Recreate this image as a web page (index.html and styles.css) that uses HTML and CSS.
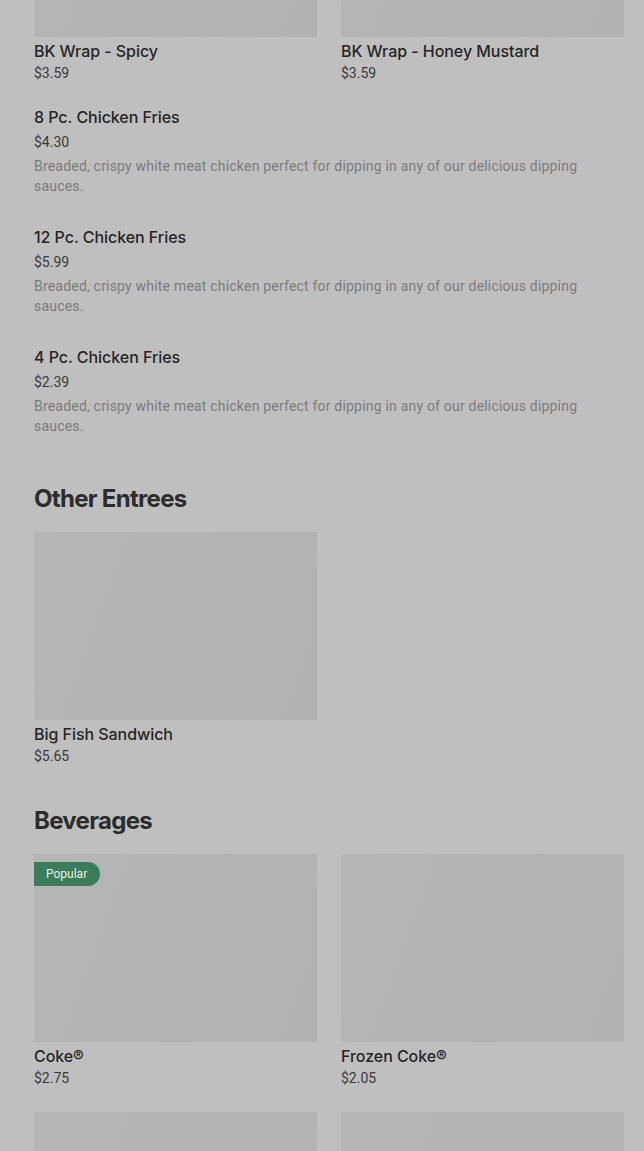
FILE: index.html
```html
<!DOCTYPE html>
<html lang="en">
<head>
<meta charset="utf-8">
<title>Menu</title>
<link rel="stylesheet" href="styles.css">
</head>
<body>
<main class="menu">
  <section class="section first">
    <div class="grid">
      <div class="card">
        <div class="thumb"></div>
        <div class="card-title">BK Wrap - Spicy</div>
        <div class="price">$3.59</div>
      </div>
      <div class="card">
        <div class="thumb"></div>
        <div class="card-title">BK Wrap - Honey Mustard</div>
        <div class="price">$3.59</div>
      </div>
    </div>
    <ul class="list">
      <li class="item">
        <div class="item-title">8 Pc. Chicken Fries</div>
        <div class="price">$4.30</div>
        <p class="desc">Breaded, crispy white meat chicken perfect for dipping in any of our delicious dipping sauces.</p>
      </li>
      <li class="item">
        <div class="item-title">12 Pc. Chicken Fries</div>
        <div class="price">$5.99</div>
        <p class="desc">Breaded, crispy white meat chicken perfect for dipping in any of our delicious dipping sauces.</p>
      </li>
      <li class="item">
        <div class="item-title">4 Pc. Chicken Fries</div>
        <div class="price">$2.39</div>
        <p class="desc">Breaded, crispy white meat chicken perfect for dipping in any of our delicious dipping sauces.</p>
      </li>
    </ul>
  </section>

  <section class="section">
    <h2 class="heading">Other Entrees</h2>
    <div class="grid">
      <div class="card">
        <div class="thumb"></div>
        <div class="card-title">Big Fish Sandwich</div>
        <div class="price">$5.65</div>
      </div>
    </div>
  </section>

  <section class="section">
    <h2 class="heading">Beverages</h2>
    <div class="grid">
      <div class="card">
        <div class="thumb"><span class="badge">Popular</span></div>
        <div class="card-title">Coke®</div>
        <div class="price">$2.75</div>
      </div>
      <div class="card">
        <div class="thumb"></div>
        <div class="card-title">Frozen Coke®</div>
        <div class="price">$2.05</div>
      </div>
      <div class="card">
        <div class="thumb"></div>
        <div class="card-title">Sprite®</div>
        <div class="price">$2.75</div>
      </div>
      <div class="card">
        <div class="thumb"></div>
        <div class="card-title">Fanta®</div>
        <div class="price">$2.75</div>
      </div>
    </div>
  </section>
</main>
</body>
</html>
```
FILE: styles.css
```css
html, body {
  margin: 0;
  padding: 0;
  background: #bfbfbf;
  overflow: hidden;
}
body {
  font-family: Roboto, "Liberation Sans", sans-serif;
  color: #333;
}
.menu {
  padding: 0 20px 0 34px;
  margin-top: -151px;
}
.section {
  display: flex;
  flex-direction: column;
}
.section + .section {
  margin-top: 39px;
}
.section.first + .section {
  margin-top: 47px;
}
.heading {
  margin: 0 0 17px;
  font-family: Inter, "Liberation Sans", sans-serif;
  font-weight: 700;
  font-size: 24px;
  line-height: 32px;
  letter-spacing: -0.7px;
  color: #2c2c2c;
}
.grid {
  display: grid;
  grid-template-columns: 1fr 1fr;
  column-gap: 24px;
  row-gap: 24px;
}
.card {
  display: flex;
  flex-direction: column;
}
.thumb {
  position: relative;
  height: 188px;
  background: linear-gradient(110deg, #b6b6b6 0%, #b4b4b4 30%, #b2b2b2 100%);
  margin-bottom: 2px;
}
.card-title, .item-title {
  font-family: Inter, "Liberation Sans", sans-serif;
  font-weight: 450;
  font-size: 16px;
  line-height: 24px;
  color: #262626;
  letter-spacing: -0.05px;
}
.price {
  font-size: 14px;
  line-height: 20px;
  color: #3a3a3a;
  margin-top: 0;
}
.list {
  list-style: none;
  margin: 22px 0 0;
  padding: 0;
  display: flex;
  flex-direction: column;
  gap: 29px;
}
.item .price {
  margin-top: 3px;
}
.desc {
  margin: 4px 0 0;
  font-size: 14px;
  line-height: 20px;
  color: #7c7c7c;
  letter-spacing: 0.2px;
  padding-right: 40px;
}
.badge {
  position: absolute;
  left: 0;
  top: 8px;
  height: 24px;
  padding: 0 13px 0 12px;
  display: flex;
  align-items: center;
  background: #3b7d5b;
  color: #e6eee9;
  font-size: 12px;
  border-radius: 0 12px 12px 0;
}
```
